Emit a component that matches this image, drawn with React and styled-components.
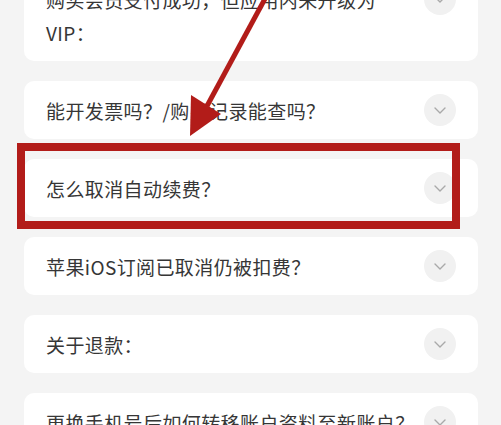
import React from "react";
import styled, { createGlobalStyle } from "styled-components";

const GlobalStyle = createGlobalStyle`
  html, body {
    margin: 0;
    padding: 0;
    background: #f4f4f4;
  }
  body {
    font-family: "Noto Sans CJK SC", "Noto Sans", sans-serif;
  }
`;

const Page = styled.div`
  position: relative;
  width: 501px;
  height: 425px;
  overflow: hidden;
  background: #f4f4f4;
`;

const List = styled.div`
  display: flex;
  flex-direction: column;
  gap: 20px;
  padding: 0 23px 0 24px;
  margin-top: -30px;
`;

const Card = styled.div`
  display: flex;
  align-items: flex-start;
  background: #fff;
  border-radius: 10px;
  padding: 12.5px 22px 12.5px 22px;
`;

const Question = styled.div`
  flex: 1;
  margin-right: 4px;
  font-size: 19px;
  letter-spacing: 0.4px;
  line-height: 33px;
  color: #363636;
`;

const Toggle = styled.div`
  flex: 0 0 32px;
  width: 32px;
  height: 32px;
  margin-top: 0.5px;
  border-radius: 50%;
  background: #f1f1f1;
  display: flex;
  align-items: center;
  justify-content: center;
`;

const Overlay = styled.svg`
  position: absolute;
  top: 0;
  left: 0;
  pointer-events: none;
`;

const questions = [
  "购买会员支付成功，但应用内未升级为VIP：",
  "能开发票吗？/购买记录能查吗？",
  "怎么取消自动续费？",
  "苹果iOS订阅已取消仍被扣费？",
  "关于退款：",
  "更换手机号后如何转移账户资料至新账户？",
];

function Chevron() {
  return (
    <svg width="12" height="7" viewBox="0 0 12 7">
      <polyline points="1,1 6,6 11,1" fill="none" stroke="#a9a9a9" strokeWidth="1.4" strokeLinecap="round" strokeLinejoin="round" />
    </svg>
  );
}

export default function App() {
  return (
    <Page>
      <GlobalStyle />
      <List>
        {questions.map((q) => (
          <Card key={q}>
            <Question>{q}</Question>
            <Toggle>
              <Chevron />
            </Toggle>
          </Card>
        ))}
      </List>
      <Overlay width="501" height="425" viewBox="0 0 501 425">
        <rect x="21" y="147" width="435" height="78" fill="none" stroke="#b21c19" strokeWidth="8" />
        <line x1="267" y1="-5" x2="207" y2="106" stroke="#b21c19" strokeWidth="5" />
        <polygon points="190,136 191,95 221,114" fill="#b21c19" />
      </Overlay>
    </Page>
  );
}
